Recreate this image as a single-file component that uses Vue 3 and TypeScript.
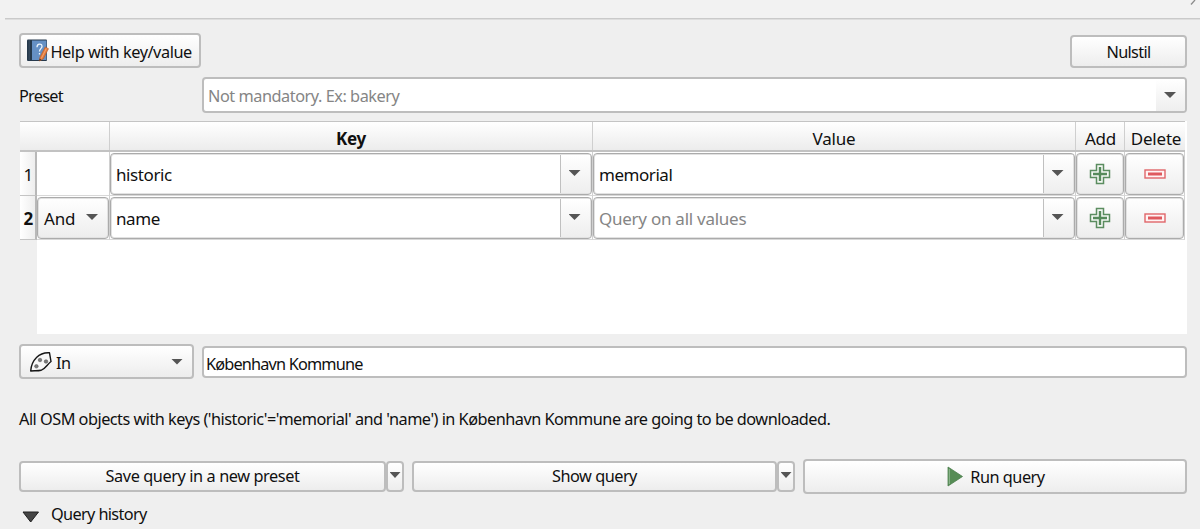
<script setup lang="ts">
interface QueryRow {
  index: number
  operator: string
  keyName: string
  value: string
}

const rows: QueryRow[] = [
  { index: 1, operator: '', keyName: 'historic', value: 'memorial' },
  { index: 2, operator: 'And', keyName: 'name', value: '' },
]
</script>

<template>
  <div class="dialog">
    <div class="strip">
      <svg class="corner" width="9" height="6" viewBox="0 0 9 6"><path d="M1 4.500 5 0" stroke="#8b8b8b" stroke-width="1.300" fill="none" /></svg>
    </div>

    <div class="row top">
      <button class="btn help">
        <svg width="22" height="23" viewBox="0 0 22 23">
          <rect x="0" y="0.500" width="20" height="21.500" rx="1" fill="#26394c" />
          <rect x="5" y="1.500" width="14.500" height="19.500" fill="#6590c4" />
          <path d="M2.200 1v20" stroke="#3e5063" stroke-width="1" />
          <path d="M10 8.200c0-4 5-4 5-.8 0 2.300-2.500 2.200-2.500 5M12.500 14v1.600" fill="none" stroke="#edf5fc" stroke-width="1.300" />
          <path d="M18.200 8 21.500 9.700 16.200 20 12.200 22 13 18z" fill="#e37a3b" stroke="#b95a26" stroke-width=".6" />
          <path d="m19.300 9.500-5 10" stroke="#f5b183" stroke-width=".8" />
          <path d="m12.200 22 .5-2.500 1.500 1.300z" fill="#3c2d28" />
        </svg>
        <span class="t-help">Help with key/value</span>
      </button>
      <button class="btn reset"><span class="t-reset">Nulstil</span></button>
    </div>

    <div class="row preset">
      <label class="t-preset">Preset</label>
      <div class="combo">
        <span class="field hint t-mandatory">Not mandatory. Ex: bakery</span>
        <span class="drop"><i class="arrow" /></span>
      </div>
    </div>

    <div class="table">
      <div class="grid head">
        <span class="corner-cell" /><span class="th" />
        <span class="th bold t-key">Key</span>
        <span class="th t-value">Value</span>
        <span class="th t-add">Add</span>
        <span class="th t-delete">Delete</span>
      </div>
      <div v-for="row in rows" :key="row.index" class="grid line">
        <span class="num" :class="{ bold: row.index === 2 }">{{ row.index }}</span>
        <span class="cell">
          <span v-if="row.operator" class="btn operator"><span>{{ row.operator }}</span><i class="arrow" /></span>
        </span>
        <span class="cell"><span class="combo">
          <span class="field" :class="'t-' + row.keyName">{{ row.keyName }}</span>
          <span class="drop"><i class="arrow" /></span>
        </span></span>
        <span class="cell"><span class="combo">
          <span v-if="row.value" class="field t-memorial">{{ row.value }}</span>
          <span v-else class="field hint t-all">Query on all values</span>
          <span class="drop"><i class="arrow" /></span>
        </span></span>
        <span class="cell"><button class="btn tool" aria-label="Add">
          <svg width="22" height="22" viewBox="0 0 22 22">
            <path d="M7.500 1.500h7v6h6v7h-6v6h-7v-6h-6v-7h6z" fill="#f4f8f4" stroke="#5b8d60" stroke-width="1.500" />
            <path d="M11 4v14M4 11h14" stroke="#568a5b" stroke-width="2.400" />
          </svg>
        </button></span>
        <span class="cell"><button class="btn tool" aria-label="Delete">
          <svg width="22" height="22" viewBox="0 0 22 22">
            <rect x="1" y="7" width="20" height="8" fill="#fff3f3" stroke="#e0666a" stroke-width="1.400" />
            <rect x="4" y="9.500" width="14" height="3" fill="#df595e" />
          </svg>
        </button></span>
      </div>
    </div>

    <div class="row place">
      <div class="btn in">
        <svg width="24" height="22" viewBox="0 0 24 22">
          <path d="M1.700 20C2 15.500 4 10 7.500 6.500 11 3 16 1.500 20.500 1.800L22 10.500C18 13.500 16.500 18 12 19.300 8.500 20.200 5 19.500 1.700 20z" fill="#f8f8f8" stroke="#151515" stroke-width="1.400" stroke-linejoin="round" />
          <g fill="#7b7b7b" stroke="#4d4d4d" stroke-width=".5"><circle cx="11" cy="9" r="1.800" /><circle cx="17" cy="10.500" r="1.800" /><circle cx="7.400" cy="15.300" r="1.800" /></g>
        </svg>
        <span class="t-in">In</span>
        <i class="arrow" />
      </div>
      <div class="combo input"><span class="field t-place">København Kommune</span></div>
    </div>

    <p class="summary"><span class="t-summary">All OSM objects with keys ('historic'='memorial' and 'name') in København Kommune are going to be downloaded.</span></p>

    <div class="row actions">
      <button class="btn save"><span class="t-save">Save query in a new preset</span></button>
      <button class="btn more" aria-label="Save options"><i class="arrow" /></button>
      <button class="btn show"><span class="t-show">Show query</span></button>
      <button class="btn more" aria-label="Show options"><i class="arrow" /></button>
      <button class="btn run">
        <svg width="17" height="21" viewBox="0 0 17 21"><path d="M1 1v19l14.500-9.500z" fill="#568c55" stroke="#4b7f4d" stroke-width=".8" /><path d="M2.300 3v15" stroke="#a5c7a5" stroke-width=".8" /></svg>
        <span class="t-run">Run query</span>
      </button>
    </div>

    <div class="history">
      <svg width="18" height="12" viewBox="0 0 18 12"><path d="M1 1h15.500L8.700 11z" fill="#444" stroke="#202020" stroke-width="1" /></svg>
      <span class="t-history">Query history</span>
    </div>
  </div>
</template>

<style>
body { margin: 0; background: #efefef; overflow: hidden; }
</style>

<style scoped>
* { box-sizing: border-box; }
.dialog { width: 1200px; height: 529px; overflow: hidden; background: #efefef; color: #101010; font: 16.3px/22px "Noto Sans", "Open Sans", sans-serif; letter-spacing: -.5px; white-space: nowrap; }
.strip { height: 20px; display: flex; justify-content: flex-end; align-items: flex-start; padding-right: 1px; background: linear-gradient(#cacaca, #cacaca) 5px 18px / 1195px 1.500px no-repeat, #f2f2f2; }
.row { display: flex; padding: 0 13px 0 19px; }
.btn { font: inherit; letter-spacing: inherit; color: inherit; margin: 0; padding: 0; border: 2px solid #bdbdbd; border-radius: 4px; background: linear-gradient(#fff, #ededed); display: flex; align-items: center; justify-content: center; }
.arrow { width: 12px; height: 6px; background: #555; clip-path: polygon(0 0, 100% 0, 50% 100%); flex: none; }
.top { height: 57px; padding-top: 13px; justify-content: space-between; }
.help { width: 182px; height: 35px; justify-content: flex-start; padding-left: 6px; }
.help span { margin: 2px 0 0 1.500px; }
.reset { width: 117px; height: 33px; margin-top: 2px; }
.preset { height: 44px; align-items: flex-start; }
.preset label { width: 183px; padding-top: 8px; }
.combo { flex: 1; height: 36px; display: flex; border: 2px solid #bdbdbd; border-radius: 4px; background: #fff; overflow: hidden; min-width: 0; }
.field { flex: 1; padding-left: 4px; align-self: center; min-width: 0; }
.preset .field { padding-top: 1px; }
.hint { color: #858585; }
.drop { width: 29px; display: flex; align-items: center; justify-content: center; background: linear-gradient(#fff, #eee); padding-right: 1px; }
.table { margin: 0 13px 0 20px; height: 213px; background: linear-gradient(90deg, #efefef 17px, #fff 17px); font-size: 17px; letter-spacing: -.2px; }
.grid { display: grid; grid-template-columns: 17px 73px 483px 483px 49px 60px; grid-template-rows: 100%; }
.head { height: 31px; background: linear-gradient(#fff, #ececec); border-top: 1px solid #c4c4c4; border-bottom: 2px solid #c2c2c2; margin-right: 2px; }
.th { border-right: 1px solid #cfcfcf; text-align: center; line-height: 33px; height: 28px; }
.th:last-child { border: 0; }
.t-add { padding-left: 1px; }
.t-delete { padding-left: 2px; }
.bold { font-weight: 700; }
.line { height: 44px; }
.num { border-right: 2px solid #b8b8b8; border-bottom: 1px solid #c4c4c4; background: linear-gradient(90deg, #fff, #eee); text-align: right; line-height: 45px; padding-right: 2px; }
.cell { display: flex; border-right: 1px solid #d0d0d0; border-bottom: 1px solid #d8d8d8; min-width: 0; }
.line .combo, .line .btn { height: 42px; margin-top: 1px; border: 1px solid #ababab; box-shadow: inset 0 0 0 1px #e2e2e2; }
.line .combo { overflow: visible; }
.line .combo .drop { border-left: 1px solid #c0c0c0; width: 30px; padding: 0 2px 2px 0; margin: 1px; }
.line .field { padding: 1px 0 0 5px; }
.tool { flex: 1; padding-bottom: 1px; }
.operator { flex: 1; justify-content: space-between; padding: 2px 10px 0 6px; }
.operator .arrow { margin-top: -4px; }
.place { padding-top: 10px; height: 48px; }
.in { width: 175px; height: 35px; margin-right: 8px; justify-content: flex-start; padding: 0 9px 0 8px; }
.in span { margin: 3px 0 0 3px; }
.in .arrow { margin-left: auto; }
.input { height: 32px; margin-top: 2px; }
.input .field { padding: 3px 0 0 2px; }
.summary { margin: 0; padding: 26px 0 0 19px; height: 77px; }
.actions { align-items: flex-start; }
.actions .btn { height: 31px; margin-top: 2px; }
.actions .save span, .actions .show span { margin-top: -1px; }
.save { width: 367px; }
.show { width: 365px; }
.actions .more { width: 18px; margin-right: 8px; }
.more .arrow { width: 11px; margin-top: -3px; }
.actions .run { flex: 1; height: 35px; margin-top: 0; }
.run span { margin: 0 0 0 6px; }
.run { padding-left: 2px; }
.history { display: flex; align-items: center; padding: 9px 0 0 22px; }
.history svg { margin-top: 5px; }
.history span { margin-left: 11px; }
.t-help { letter-spacing: -.44px; }
.t-reset { letter-spacing: -.7px; }
.t-preset { letter-spacing: -.75px; }
.t-mandatory { letter-spacing: -.46px; }
.t-summary { letter-spacing: -.51px; }
.t-place { letter-spacing: -.83px; }
.t-save { letter-spacing: -.41px; }
.t-history { letter-spacing: -.64px; }
.t-historic, .t-name { letter-spacing: -.4px; }
.t-memorial { letter-spacing: -.45px; }
.t-all { letter-spacing: -.26px; }
</style>
